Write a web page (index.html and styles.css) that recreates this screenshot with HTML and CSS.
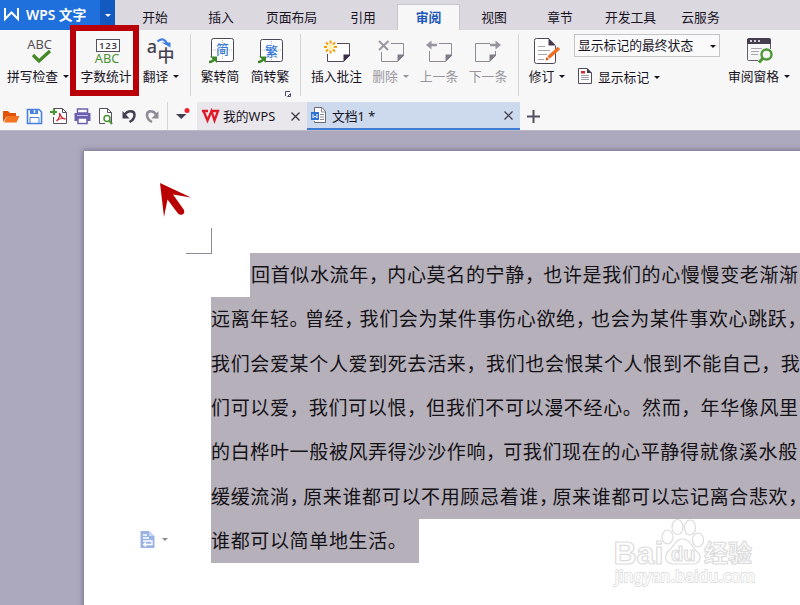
FILE: index.html
```html
<!DOCTYPE html>
<html lang="zh-CN">
<head>
<meta charset="utf-8">
<title>WPS 文字</title>
<link rel="stylesheet" href="styles.css">
</head>
<body>
<div class="app">
  <header class="menubar">
    <div class="brand">
      <svg width="17" height="14" viewBox="0 0 17 14"><path d="M2 1V12L8.500 5.500 15 12V1" fill="none" stroke="#fff" stroke-width="2"/></svg>
      <span>WPS 文字</span>
    </div>
    <div class="brand-more"><i class="caret light"></i></div>
    <nav class="tabs">
      <span class="tab t66">开始</span><span class="tab t66">插入</span><span class="tab t75">页面布局</span><span class="tab t68">引用</span><span class="tab t63 active">审阅</span><span class="tab t68">视图</span><span class="tab t64">章节</span><span class="tab t77">开发工具</span><span class="tab t63">云服务</span>
    </nav>
  </header>

  <section class="ribbon">
    <div class="group g1">
      <div class="btn w76">
        <svg width="34" height="30" viewBox="0 0 34 30"><text x="18.500" y="13" class="abc" fill="#555158">ABC</text><path d="M12 19l6 6 11-10" fill="none" stroke="#438a27" stroke-width="3.200"/></svg>
        <span>拼写检查<i class="caret"></i></span>
      </div>
      <div class="btn w60">
        <svg width="34" height="30" viewBox="0 0 34 30"><rect x="7.500" y="3.500" width="23" height="12" fill="#fff" stroke="#554e5c"/><text x="19.300" y="13.300" class="num">123</text><text x="18" y="27" class="abc" fill="#4c9434">ABC</text></svg>
        <span>字数统计</span>
      </div>
      <div class="btn w50">
        <svg width="34" height="30" viewBox="0 0 34 30"><text x="8" y="17" class="lat">a</text><text x="22" y="26" class="zh">中</text><path d="M13.500 5.500c4-4 8-2 9.500 2" fill="none" stroke="#3e7de0" stroke-width="2.200"/><path d="M17.500 6.500h9v5z" fill="#3e7de0"/></svg>
        <span>翻译<i class="caret"></i></span>
      </div>
    </div>
    <div class="group g2">
      <div class="btn w50">
        <svg width="34" height="30" viewBox="0 0 34 30"><rect x="8.500" y="2.500" width="22" height="23" rx="2" fill="#fff" stroke="#4d4555"/><path d="M10 14h19M19.500 4v20" stroke="#bbb" stroke-dasharray="1 1"/><text x="19.500" y="18" class="conv">简</text><path d="M4 21h9v8H4z" fill="#f7f7f7"/><path d="M6 26q4 0 6-4" fill="none" stroke="#3d8727" stroke-width="2.500"/><path d="M7 20.500h7v6.500z" fill="#3d8727"/></svg>
        <span>繁转简</span>
      </div>
      <div class="btn w50">
        <svg width="34" height="30" viewBox="0 0 34 30"><rect x="7.500" y="3.500" width="22" height="22" rx="2" fill="#fff" stroke="#4d4555"/><path d="M9 14h19M18.500 5v19" stroke="#bbb" stroke-dasharray="1 1"/><text x="18.500" y="19.500" class="conv small">繁</text><path d="M3 21h9v8H3z" fill="#f7f7f7"/><path d="M5 26q4 0 6-4" fill="none" stroke="#3d8727" stroke-width="2.500"/><path d="M6 20.500h7v6.500z" fill="#3d8727"/></svg>
        <span>简转繁</span>
      </div>
      <svg class="launcher" width="6" height="6" viewBox="0 0 6 6"><path d="M.5 5V.5H5M2.500 5.500h3v-3z" fill="none" stroke="#4d476b"/></svg>
    </div>
    <div class="group g3">
      <div class="btn w61">
        <svg width="34" height="30" viewBox="0 0 34 30"><path d="M17 7.500h12.500v12l-6 6h-16V18" fill="#fff" stroke="#54485c"/><path d="M30 18.500v1l-6.500 6.500v-7.500z" fill="#3c2c48"/><circle cx="10.500" cy="11" r="3.200" fill="#fff3bb"/><path d="M10.500 4.500v3M10.500 14.500v3M4 11h3M14 11h3M6 6.500l2 2M13 13.500l2 2M6 15.500l2-2M13 8.500l2-2" stroke="#f5a00c" stroke-width="2"/></svg>
        <span>插入批注</span>
      </div>
      <div class="btn w47 off">
        <svg width="34" height="30" viewBox="0 0 34 30"><path d="M17 7.500h12.500v12l-6 6h-16V16" fill="none" stroke="#918a97"/><path d="M30 18.500v1l-6.500 6.500v-7.500z" fill="#817a88"/><path d="M5 5l9 9M14.500 5L5 14" stroke="#99939f" stroke-width="1.800"/></svg>
        <span>删除<i class="caret"></i></span>
      </div>
      <div class="btn w50 off">
        <svg width="34" height="30" viewBox="0 0 34 30"><path d="M17 7.500h12.500v12l-6 6h-16V15" fill="none" stroke="#918a97"/><path d="M30 18.500v1l-6.500 6.500v-7.500z" fill="#817a88"/><path d="M7 9h8" stroke="#99939f" stroke-width="2.500"/><path d="M4 9l5.500-4.500v9z" fill="#99939f"/></svg>
        <span>上一条</span>
      </div>
      <div class="btn w48 off">
        <svg width="34" height="30" viewBox="0 0 34 30"><path d="M19 7.500H4.500v18h14l6-6V15" fill="none" stroke="#918a97"/><path d="M25 18.500v1l-6.500 6.500v-7.500z" fill="#817a88"/><path d="M19 9h8" stroke="#99939f" stroke-width="2.500"/><path d="M30 9l-5.500-4.500v9z" fill="#99939f"/></svg>
        <span>下一条</span>
      </div>
    </div>
    <div class="group g4">
      <div class="btn w46">
        <svg width="34" height="30" viewBox="0 0 34 30"><path d="M19 2.500H6.500q-2 0-2 2v21q0 2 2 2h17q2 0 2-2V10" fill="#fff" stroke="#4e4757"/><path d="M18.500 2l7.500 7.500h-7.500z" fill="#433a4d"/><path d="M8 10.500h7M8 14.500h12M8 18.500h9M8 23.500h6" stroke="#aaa6ae"/><path d="M18.500 21.500L29 12" stroke="#ee7124" stroke-width="3.600"/><path d="M15.500 24.500l1-3.500 2.500 2.500z" fill="#c84c15"/></svg>
        <span>修订<i class="caret"></i></span>
      </div>
      <div class="stack">
        <div class="combo">显示标记的最终状态<i class="caret"></i></div>
        <div class="show">
          <svg width="14" height="16" viewBox="0 0 14 16"><path d="M.5.500h8.500l4.500 4.500v10.500H.5z" fill="#fff" stroke="#514a59"/><path d="M9 0v5h5z" fill="#433a4d"/><path d="M3 3h4v2.500H3z" fill="#d42b2b"/><path d="M3 7.500h8M3 9.500h8M3 11.500h8" stroke="#a5a0aa"/></svg>
          <span>显示标记<i class="caret"></i></span>
        </div>
      </div>
      <div class="btn w68">
        <svg width="34" height="30" viewBox="0 0 34 30"><path d="M5.500 3v20.500q0 1 1 1H16M28.500 8v5" fill="none" stroke="#655e6c"/><path d="M5 4q0-2 2-2h20q2 0 2 2v4H5z" fill="#463d51"/><path d="M8 5h2M12 5h2M16 5h2" stroke="#fff" stroke-width="1.500"/><path d="M9 12.500h11M9 15.500h8M9 18.500h7" stroke="#aaa6ae"/><circle cx="24.500" cy="18.500" r="5" fill="#f7f7f7" stroke="#4d9737" stroke-width="2.400"/><path d="M21 22l-4 4.500" stroke="#4d9737" stroke-width="3"/></svg>
        <span>审阅窗格<i class="caret"></i></span>
      </div>
    </div>
    <div class="callout"></div>
  </section>

  <section class="docbar">
    <div class="quick">
      <svg width="18" height="18" viewBox="0 0 18 18"><path d="M1 15V4h5l2 2h6v3H5z" fill="#e25209"/><path d="M5 9h12.500l-3 6.500H2z" fill="#f47421"/></svg>
      <svg width="18" height="18" viewBox="0 0 18 18"><path d="M2.500 2.500H14l2.500 2.500v11.500h-14z" fill="#fff" stroke="#4980de" stroke-width="1.600"/><path d="M5 2h8v5H5z" fill="#4980de"/><path d="M9.500 3v3" stroke="#fff" stroke-width="1.500"/><path d="M5 16.500v-6h9v6" fill="none" stroke="#4980de"/></svg>
      <svg width="20" height="18" viewBox="0 0 20 18"><path d="M4.500 10v6.500h13v-11l-4-4h-9v2" fill="#fff" stroke="#564e60"/><path d="M13.500 1.500v4h4" fill="none" stroke="#564e60"/><path d="M10.500 6c1 3 3 6 6 6-3-1-7 0-9 2 2-2 4-5 3-8z" fill="none" stroke="#d12b31" stroke-width="1.300"/><path d="M1 5h7M5 2v6" stroke="#4a9433" stroke-width="2.200"/></svg>
      <svg width="18" height="18" viewBox="0 0 18 18"><path d="M3.500 2h10v4h-10z" fill="#fff" stroke="#6a60ae" stroke-width="1.500"/><path d="M.5 6h16v8H.5z" fill="#6a60ae"/><path d="M4 11h9v5.500H4z" fill="#fff" stroke="#6a60ae" stroke-width="1.500"/><path d="M3 8.500h11" stroke="#c9c3eb"/></svg>
      <svg width="18" height="18" viewBox="0 0 18 18"><path d="M7 16.500H1.500v-15h8l4 4V16" fill="#fff" stroke="#564e60"/><path d="M9.500 1.500v4h4" fill="none" stroke="#564e60"/><circle cx="9" cy="11.500" r="3" fill="#fff" stroke="#4a9433" stroke-width="1.500"/><path d="M11 13.500l3 3.500" stroke="#4a9433" stroke-width="2"/></svg>
      <svg width="18" height="18" viewBox="0 0 18 18"><path d="M3.500 8c3-5 10-5 10 0 0 4-3 6-5 7" fill="none" stroke="#463e51" stroke-width="2.500"/><path d="M1.500 4v7.500h7z" fill="#463e51"/></svg>
      <svg width="18" height="18" viewBox="0 0 18 18"><path d="M12.500 8C9.500 3 3 3 3 8c0 4 3 6 5 7" fill="none" stroke="#918b97" stroke-width="2.500"/><path d="M14.500 4v7.500h-7z" fill="#918b97"/></svg>
    </div>
    <div class="more"><svg width="16" height="16" viewBox="0 0 16 16"><path d="M1 6h10.500l-5.200 5z" fill="#463e51"/><circle cx="12" cy="2.500" r="2.500" fill="#ef2029"/></svg></div>
    <div class="doc home">
      <svg width="17" height="14" viewBox="0 0 17 14"><path d="M0 2H6M1.500 2l4 9.500L9.500 2l3 9.500L16 2H8.500" fill="none" stroke="#e01929" stroke-width="2.300"/></svg>
      <span class="name">我的WPS</span><svg class="close" width="9" height="9" viewBox="0 0 9 9"><path d="M.5.500l8 8M8.500.500l-8 8"/></svg>
    </div>
    <div class="doc current">
      <svg width="17" height="17" viewBox="0 0 17 17"><path d="M3.500 5V.5H11l3.500 4v11h-11V14" fill="#fff" stroke="#6d6675"/><path d="M10.500 1v4h4M9 7.500h4M9 10h4M9 12.500h4" fill="none" stroke="#8b8590"/><rect y="5" width="8" height="8" fill="#2d72d5"/><path d="M2 7v4l2-2 2 2V7" fill="none" stroke="#fff"/></svg>
      <span class="name">文档1 *</span><svg class="close" width="9" height="9" viewBox="0 0 9 9"><path d="M.5.500l8 8M8.500.500l-8 8"/></svg>
    </div>
    <svg class="plus" width="13" height="13" viewBox="0 0 13 13"><path d="M6.500 0v13M0 6.500h13" stroke="#554e60" stroke-width="2"/></svg>
  </section>

  <main class="workspace">
    <article class="page">
      <div class="corner"></div>
      <div class="text">
        <p class="line first l1">回首似水流年<b>，</b>内心莫名的宁静<b>，</b>也许是我们的心慢慢变老渐渐</p>
        <p class="line l2">远离年轻<b>。</b>曾经<b>，</b>我们会为某件事伤心欲绝<b>，</b>也会为某件事欢心跳跃<b>，</b></p>
        <p class="line l3">我们会爱某个人爱到死去活来<b>，</b>我们也会恨某个人恨到不能自己<b>，</b>我</p>
        <p class="line l4">们可以爱<b>，</b>我们可以恨<b>，</b>但我们不可以漫不经心<b>。</b>然而<b>，</b>年华像风里</p>
        <p class="line l5">的白桦叶一般被风弄得沙沙作响<b>，</b>可我们现在的心平静得就像溪水般</p>
        <p class="line l6">缓缓流淌<b>，</b>原来谁都可以不用顾忌着谁<b>，</b>原来谁都可以忘记离合悲欢<b>，</b></p>
        <p class="line last l3">谁都可以简单地生活<b>。</b></p>
      </div>
      <svg class="pointer" width="32" height="36" viewBox="0 0 32 36"><path d="M0 0L31 14.500 13 11.500 24 27q1 3-1.500 4.500-2.500 1-4.500-1L7.500 16.500 4 34z" fill="#b80000"/></svg>
      <div class="paste"><svg width="15" height="17" viewBox="0 0 15 17"><path d="M.5 0H9l5.500 5v12H.5z" fill="#9bb3e3"/><path d="M9 0v5h5.500" fill="#c8d5f0"/><path d="M3 4h4M3 7h6M3 10h9v3.500H4M6 11.500l-2.500 2 2.500 2" fill="none" stroke="#fff" stroke-width="1.300"/></svg><i class="caret"></i></div>
      <svg class="mark" width="150" height="74" viewBox="0 0 150 74">
        <g fill="#fff" stroke="#dcdcdc" stroke-width="1.200">
          <text x="1.500" y="44.500" class="m-big">Bai</text>
          <ellipse cx="55.500" cy="18" rx="5.500" ry="7"/><ellipse cx="65.500" cy="8" rx="5.500" ry="7.500"/><ellipse cx="78" cy="8.500" rx="5.500" ry="7.500"/><ellipse cx="86" cy="21" rx="5.500" ry="7"/>
          <path d="M70.500 20c-7 0-8 7-13 11-6 5-5 14 4 14h19c8 0 10-8 4-13-5-5-7-12-14-12z"/>
          <text x="59" y="42" class="m-du">du</text>
          <text x="92" y="43" class="m-zh">经验</text>
        </g>
        <text x="3" y="63" class="m-url" textLength="140">jingyan.baidu.com</text>
      </svg>
    </article>
  </main>
</div>
</body>
</html>
```
FILE: styles.css
```css
* { box-sizing: border-box; }
body { margin: 0; width: 800px; height: 605px; overflow: hidden; font-family: "Noto Sans", "Noto Sans CJK SC", sans-serif; font-size: 12.8px; color: #18131f; }
svg { display: block; flex: none; overflow: visible; }
.app { display: flex; flex-direction: column; width: 800px; height: 605px; }
.caret { display: inline-block; border: 3px solid transparent; border-top: 3px solid currentColor; border-bottom: 0; margin-left: 5px; vertical-align: 3px; }

.menubar { height: 30px; flex: none; display: flex; background: #dbd8df; }
.brand { width: 100px; background: #1f6fdd; color: #fff; display: flex; align-items: center; gap: 6px; padding: 0 0 2px 3px; font-size: 13.800px; font-weight: 600; white-space: nowrap; }
.brand-more { width: 15px; background: #1259c0; display: flex; align-items: center; justify-content: center; }
.caret.light { color: #fff; margin: 0; }
.tabs { display: flex; padding: 4px 0 0 7px; }
.tab { display: flex; align-items: center; justify-content: center; height: 26px; padding-bottom: 2px; white-space: nowrap; }
.tab.active { background: #f7f7f7; border: 1px solid #c9c6cd; border-bottom: 0; color: #1b57b8; font-weight: 700; }
.t63 { width: 63px; } .t64 { width: 64px; } .t66 { width: 66px; } .t68 { width: 68px; } .t75 { width: 75px; } .t77 { width: 77px; }

.ribbon { position: relative; height: 72px; flex: none; display: flex; background: #f7f7f7; }
.group { position: relative; display: flex; height: 62px; margin-top: 4px; padding-top: 2px; border-right: 1px solid #d6d3d9; }
.g1 { width: 191px; } .g2 { width: 110px; padding-left: 4px; } .g3 { width: 218px; padding-left: 5px; } .g4 { flex: 1; padding-left: 5px; border: 0; }
.btn { display: flex; flex-direction: column; align-items: center; flex: none; white-space: nowrap; line-height: 20px; }
.w46 { width: 46px; } .w47 { width: 47px; } .w48 { width: 48px; } .w50 { width: 50px; } .w60 { width: 60px; } .w61 { width: 61px; } .w68 { width: 68px; } .w76 { width: 76px; }
.off { color: #99949e; }
.abc { font: 12.800px "Noto Sans", sans-serif; text-anchor: middle; }
.num { font: 600 9.500px "Noto Sans", sans-serif; text-anchor: middle; fill: #45404c; letter-spacing: .8px; }
.lat { font: 500 18px "Noto Sans", sans-serif; text-anchor: middle; fill: #463f4f; }
.zh { font: 500 17px "Noto Sans CJK SC", sans-serif; text-anchor: middle; fill: #463f4f; }
.conv { font: 500 13px "Noto Sans CJK SC", sans-serif; text-anchor: middle; fill: #347ad8; }
.launcher { position: absolute; right: 9px; bottom: -1px; }
.stack { width: 155px; padding-left: 4px; margin-top: -2px; }
.combo { width: 146px; height: 23px; border: 1px solid #c6c3c9; background: #fafafa; display: flex; align-items: center; justify-content: space-between; padding: 0 3px 2px; white-space: nowrap; }
.combo .caret { position: relative; top: 2px; }
.show { display: flex; align-items: center; gap: 6px; height: 20px; margin: 9px 0 0 4px; }
.callout { position: absolute; left: 70px; top: -5px; width: 69px; height: 71px; border: 6px solid #b90009; }

.docbar { height: 28px; flex: none; display: flex; background: #f7f7f7; }
.quick { width: 168px; display: flex; align-items: center; gap: 5.400px; padding-left: 2px; border-right: 1px solid #d6d3d9; }
.more { width: 29px; padding: 6px 0 0 7px; }
.doc { display: flex; align-items: center; }
.doc .name { flex: 1; white-space: nowrap; padding-bottom: 2px; }
.home { width: 110px; background: #e9e7eb; padding: 0 7px 0 5px; gap: 4px; }
.current { width: 213px; background: #cddaee; border-bottom: 2px solid #3f7bd2; padding: 0 7px 0 4px; gap: 4px; }
.current .name { padding-bottom: 0; }
.close path { stroke: #38333e; stroke-width: 1.200; fill: none; }
.plus { align-self: center; margin-left: 7px; }

.workspace { flex: 1; background: #aca8be; border-top: 1px solid #bab7c7; padding: 20px 0 0 84px; overflow: hidden; }
.page { position: relative; width: 760px; height: 500px; background: #fff; box-shadow: 0 0 5px 1px #77728d; overflow: visible; padding-top: 77px; }
.corner { width: 26px; height: 26px; margin-left: 102px; border-right: 1px solid #8f8a96; border-bottom: 1px solid #8f8a96; }
.text { margin-left: 127px; margin-top: -1px; }
.line { margin: 0; height: 44.350px; width: 640px; background: #b5b0b9; white-space: nowrap; font: 400 19px/41.600px "Noto Sans CJK SC", sans-serif; letter-spacing: .65px; color: #141117; }
.line b { font-weight: 400; letter-spacing: var(--p); }
.first { margin-left: 39px; padding-left: 1px; }
.last { width: 208px; }
.l1 { --p: -.6px; } .l2 { --p: -3.700px; } .l3 { --p: .6px; } .l4 { --p: .2px; } .l5 { --p: -2px; } .l6 { --p: -5.500px; }
.pointer { position: absolute; left: 76px; top: 32px; }
.paste { position: absolute; left: 56px; top: 380px; display: flex; align-items: center; gap: 2px; color: #8c8792; }
.mark { position: absolute; left: 528px; top: 368px; }
.m-big { font: 700 32px "Liberation Sans", sans-serif; }
.m-du { font: 700 20px "Liberation Sans", sans-serif; }
.m-zh { font: 700 24px "Noto Sans CJK SC", sans-serif; }
.m-url { font: 400 15.500px "Noto Sans", sans-serif; fill: #fff; stroke: #dfdfdf; stroke-width: 1.800; paint-order: stroke; }
```
